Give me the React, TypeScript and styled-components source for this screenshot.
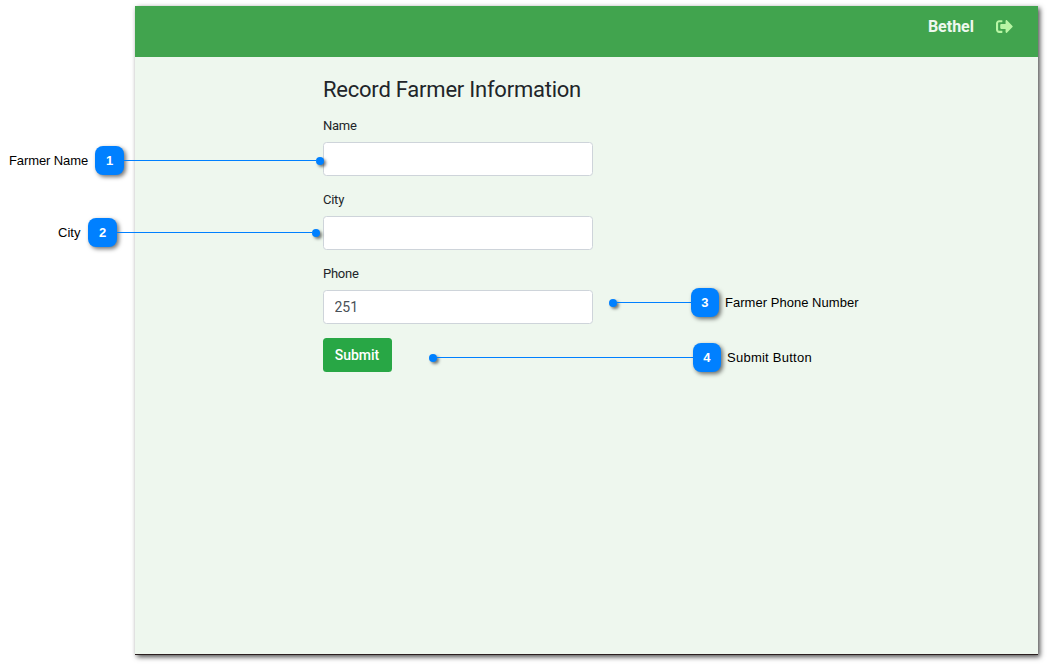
import React from "react";
import styled, { createGlobalStyle } from "styled-components";
import { FaSignOutAlt } from "react-icons/fa";

const GlobalStyle = createGlobalStyle`
  *, *::before, *::after { box-sizing: border-box; }
  body { margin: 0; background: #fff; font-family: Roboto, "Liberation Sans", sans-serif; }
`;

const Page = styled.main`
  position: relative;
  width: 1048px;
  height: 665px;
  padding: 6px 10px 10px 135px;
  overflow: hidden;
`;

const Window = styled.section`
  display: flex;
  flex-direction: column;
  height: 649px;
  background: #eef7ee;
  border-bottom: 1px solid #2a1f1f;
  box-shadow: 2px 2px 5px rgba(0, 0, 0, 0.7);
`;

const Header = styled.header`
  display: flex;
  justify-content: flex-end;
  align-items: flex-start;
  gap: 22px;
  height: 51px;
  padding: 11px 25px 0 0;
  background: #41a44e;
`;

const UserName = styled.span`
  font-size: 16px;
  line-height: 20px;
  font-weight: 700;
  color: #eef8ee;
`;

const LogoutButton = styled.button`
  display: flex;
  margin: 1px 0 0;
  padding: 0;
  border: 0;
  background: none;
  color: #b9f6a5;
`;

const Form = styled.form`
  display: flex;
  flex-direction: column;
  align-items: flex-start;
  width: 270px;
  margin: 19px 0 0 188px;
`;

const Title = styled.h1`
  margin: 0 0 12px;
  font-size: 22px;
  line-height: 28px;
  font-weight: 400;
  letter-spacing: -0.23px;
  color: #212529;
  white-space: nowrap;
`;

const Field = styled.label`
  display: flex;
  flex-direction: column;
  gap: 6px;
  width: 100%;
  margin-bottom: 14px;
`;

const FieldName = styled.span`
  font-size: 13px;
  line-height: 20px;
  letter-spacing: -0.25px;
  color: #212529;
`;

const Input = styled.input`
  width: 100%;
  height: 34px;
  padding: 0 10.5px;
  border: 1px solid #ced4da;
  border-radius: 3.5px;
  background: #fff;
  font: 400 14px/21px Roboto, sans-serif;
  color: #495057;
`;

const Submit = styled.button`
  width: 69px;
  height: 34px;
  padding: 0 1px 0 0;
  border: 0;
  border-radius: 3.5px;
  background: #28a745;
  font: 500 14px/21px Roboto, sans-serif;
  color: #fff;
`;

type Side = "left" | "right";

const Callout = styled.div<{ $x: number; $y: number; $side: Side }>`
  position: absolute;
  left: ${(p) => p.$x}px;
  top: ${(p) => p.$y}px;
  display: flex;
  flex-direction: ${(p) => (p.$side === "left" ? "row" : "row-reverse")};
  align-items: center;
  height: 29px;
`;

const CalloutText = styled.span<{ $width: number; $side: Side; $spacing: number }>`
  width: ${(p) => p.$width}px;
  margin: ${(p) => (p.$side === "left" ? "0 7.4px 0 0" : "0 0 0 6px")};
  padding-top: 1px;
  font: 13px/16px "Liberation Sans", Arial, sans-serif;
  letter-spacing: ${(p) => p.$spacing}px;
  color: #000;
  white-space: nowrap;
`;

const Badge = styled.span`
  display: flex;
  align-items: center;
  justify-content: center;
  width: 28.5px;
  height: 28.5px;
  padding-top: 1px;
  border-radius: 8px;
  background: #0080ff;
  box-shadow: 2px 2px 4px rgba(0, 0, 0, 0.55);
  font: 700 13px/16px "Liberation Sans", Arial, sans-serif;
  color: #fff;
`;

const Line = styled.span<{ $length: number }>`
  width: ${(p) => p.$length}px;
  height: 1px;
  background: #0080ff;
`;

const Dot = styled.span`
  width: 8px;
  height: 8px;
  border-radius: 50%;
  background: #0080ff;
  box-shadow: 2px 2px 3px rgba(0, 0, 0, 0.5);
`;

interface Note {
  n: number;
  text: string;
  side: Side;
  x: number;
  y: number;
  width: number;
  length: number;
  spacing: number;
}

const notes: Note[] = [
  { n: 1, text: "Farmer Name", side: "left", x: 9, y: 146, width: 79, length: 192.5, spacing: -0.1 },
  { n: 2, text: "City", side: "left", x: 58, y: 218, width: 23, length: 195.5, spacing: 0 },
  { n: 3, text: "Farmer Phone Number", side: "right", x: 609, y: 288, width: 134, length: 73.5, spacing: 0.03 },
  { n: 4, text: "Submit Button", side: "right", x: 429, y: 343, width: 86, length: 255.5, spacing: 0.25 },
];

export default function App() {
  return (
    <Page>
      <GlobalStyle />
      <Window>
        <Header>
          <UserName>Bethel</UserName>
          <LogoutButton type="button" aria-label="Log out">
            <FaSignOutAlt size={17} />
          </LogoutButton>
        </Header>
        <Form>
          <Title>Record Farmer Information</Title>
          <Field>
            <FieldName>Name</FieldName>
            <Input />
          </Field>
          <Field>
            <FieldName>City</FieldName>
            <Input />
          </Field>
          <Field>
            <FieldName>Phone</FieldName>
            <Input defaultValue="251" />
          </Field>
          <Submit type="button">Submit</Submit>
        </Form>
      </Window>
      {notes.map((note) => (
        <Callout key={note.n} $x={note.x} $y={note.y} $side={note.side}>
          <CalloutText $width={note.width} $side={note.side} $spacing={note.spacing}>
            {note.text}
          </CalloutText>
          <Badge>{note.n}</Badge>
          <Line $length={note.length} />
          <Dot />
        </Callout>
      ))}
    </Page>
  );
}
